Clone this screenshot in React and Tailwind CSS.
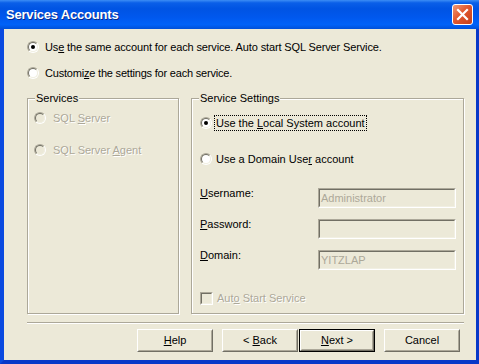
import React from "react";

function Radio({ checked, disabled }) {
  return (
    <span className="w-[12px] h-[12px] shrink-0 rounded-full border border-t-[#aca899] border-l-[#aca899] border-b-white border-r-white flex">
      <span
        className={
          disabled
            ? "flex-1 rounded-full border border-t-[#716f64] border-l-[#716f64] border-b-[#f1efe2] border-r-[#f1efe2] bg-[#ece9d8] flex items-center justify-center"
            : "flex-1 rounded-full border border-t-[#716f64] border-l-[#716f64] border-b-[#f1efe2] border-r-[#f1efe2] bg-white flex items-center justify-center"
        }
      >
        {checked && <span className="w-[4px] h-[4px] rounded-full bg-black" />}
      </span>
    </span>
  );
}

function Disabled({ children }) {
  return <span className="text-[#aca899] [text-shadow:1px_1px_0_#ffffff]">{children}</span>;
}

function Input({ value }) {
  return (
    <div className="w-[138px] h-[20px] border border-t-[#aca899] border-l-[#aca899] border-b-white border-r-white flex">
      <div className="flex-1 border border-t-[#716f64] border-l-[#716f64] border-b-[#f1efe2] border-r-[#f1efe2] bg-[#ece9d8] flex items-center px-[1px] text-[#aca899]">
        {value}
      </div>
    </div>
  );
}

function Button({ children, def }) {
  const inner = (
    <div className="w-full h-full border border-t-white border-l-white border-b-[#716f64] border-r-[#716f64] flex">
      <div className="flex-1 border border-t-[#ece9d8] border-l-[#ece9d8] border-b-[#aca899] border-r-[#aca899] flex items-center justify-center">
        <span>{children}</span>
      </div>
    </div>
  );
  if (def) {
    return <div className="w-[76px] h-[23px] border border-black flex">{inner}</div>;
  }
  return <div className="w-[76px] h-[23px] flex">{inner}</div>;
}

export default function App() {
  return (
    <div className="w-[479px] h-[364px] flex flex-col overflow-hidden font-['Liberation_Sans',Arial,sans-serif] text-[11px] leading-[13px] text-black bg-[#0842d6]">
      {/* Title bar */}
      <div className="h-[29px] shrink-0 flex items-center pl-[6px] pr-[6px] bg-[linear-gradient(to_bottom,#3c8df5_0%,#0a5fe8_10%,#0054e3_30%,#0058ee_60%,#0062f8_85%,#0050d8_100%)]">
        <span className="text-white font-bold text-[13px] leading-[16px] tracking-[-0.2px] [text-shadow:1px_1px_0_#0a2a8a]">
          Services Accounts
        </span>
        <div className="ml-auto w-[21px] h-[21px] rounded-[3px] border border-white bg-[linear-gradient(135deg,#f09a77_0%,#e2582f_45%,#c4401b_100%)] flex items-center justify-center">
          <svg width="13" height="13" viewBox="0 0 13 13">
            <path d="M2 2 L11 11 M11 2 L2 11" stroke="#ffffff" strokeWidth="2.2" strokeLinecap="square" />
          </svg>
        </div>
      </div>

      {/* Frame + client area */}
      <div className="flex-1 flex border-l-[4px] border-r-[4px] border-b-[4px] border-l-[#0a4ae0] border-r-[#0838c8] border-b-[#0838c8]">
        <div className="flex-1 bg-[#ece9d8] flex flex-col pl-[23px] pr-[12px] pt-[10px]">
          {/* top radios */}
          <div className="h-[16px] flex items-center">
            <Radio checked />
            <span className="ml-[6px] tracking-[-0.13px]">
              Us<u>e</u> the same account for each service. Auto start SQL Server Service.
            </span>
          </div>
          <div className="h-[16px] flex items-center mt-[10px]">
            <Radio />
            <span className="ml-[6px] tracking-[-0.2px]">
              Customi<u>z</u>e the settings for each service.
            </span>
          </div>

          {/* group boxes */}
          <div className="flex gap-[12px] mt-[11px]">
            <fieldset className="w-[152px] h-[222px] border border-[#aca899] shadow-[1px_1px_0_#ffffff,inset_1px_1px_0_#ffffff] p-0 m-0">
              <legend className="ml-[7px] px-[1px] leading-[13px] bg-[#ece9d8]">Services</legend>
              <div className="pl-[6px] pt-[5px] flex flex-col gap-[16px]">
                <div className="h-[16px] flex items-center">
                  <Radio disabled />
                  <span className="ml-[7px]">
                    <Disabled>
                      SQL <u>S</u>erver
                    </Disabled>
                  </span>
                </div>
                <div className="h-[16px] flex items-center">
                  <Radio disabled />
                  <span className="ml-[7px]">
                    <Disabled>
                      SQL Server <u>A</u>gent
                    </Disabled>
                  </span>
                </div>
              </div>
            </fieldset>

            <fieldset className="w-[273px] h-[222px] border border-[#aca899] shadow-[1px_1px_0_#ffffff,inset_1px_1px_0_#ffffff] p-0 m-0">
              <legend className="ml-[7px] px-[1px] leading-[13px] bg-[#ece9d8]">Service Settings</legend>
              <div className="pl-[8px] pt-[10px] flex flex-col">
                <div className="h-[16px] flex items-center">
                  <Radio checked />
                  <span className="ml-[2px] h-[16px] px-[1px] pt-[1px] block border border-dotted border-black">
                    <span>
                      Use the <u>L</u>ocal System account
                    </span>
                  </span>
                </div>
                <div className="h-[16px] flex items-center mt-[20px]">
                  <Radio />
                  <span className="ml-[4px]">
                    Use a Domain Use<u>r</u> account
                  </span>
                </div>

                <div className="mt-[21px] flex flex-col gap-[11px]">
                  <div className="flex items-start">
                    <span className="w-[118px] -mt-[1px]">
                      <u>U</u>sername:
                    </span>
                    <Input value="Administrator" />
                  </div>
                  <div className="flex items-start">
                    <span className="w-[118px] -mt-[1px]">
                      <u>P</u>assword:
                    </span>
                    <Input value="" />
                  </div>
                  <div className="flex items-start">
                    <span className="w-[118px] -mt-[1px]">
                      <u>D</u>omain:
                    </span>
                    <Input value="YITZLAP" />
                  </div>
                </div>

                <div className="h-[13px] flex items-center mt-[22px]">
                  <span className="w-[13px] h-[13px] border border-t-[#aca899] border-l-[#aca899] border-b-white border-r-white flex">
                    <span className="flex-1 border border-t-[#716f64] border-l-[#716f64] border-b-[#f1efe2] border-r-[#f1efe2] bg-[#ece9d8]" />
                  </span>
                  <span className="ml-[4px]">
                    <Disabled>
                      Aut<u>o</u> Start Service
                    </Disabled>
                  </span>
                </div>
              </div>
            </fieldset>
          </div>

          {/* separator */}
          <div className="mt-[8px] h-[2px] border-t border-t-[#aca899] border-b border-b-white" />

          {/* buttons */}
          <div className="mt-[5px] flex pl-[110px]">
            <Button>
              <u>H</u>elp
            </Button>
            <div className="w-[9px]" />
            <Button>
              &lt; <u>B</u>ack
            </Button>
            <div className="w-[1px]" />
            <Button def>
              <u>N</u>ext &gt;
            </Button>
            <div className="w-[9px]" />
            <Button>Cancel</Button>
          </div>
        </div>
      </div>
    </div>
  );
}
